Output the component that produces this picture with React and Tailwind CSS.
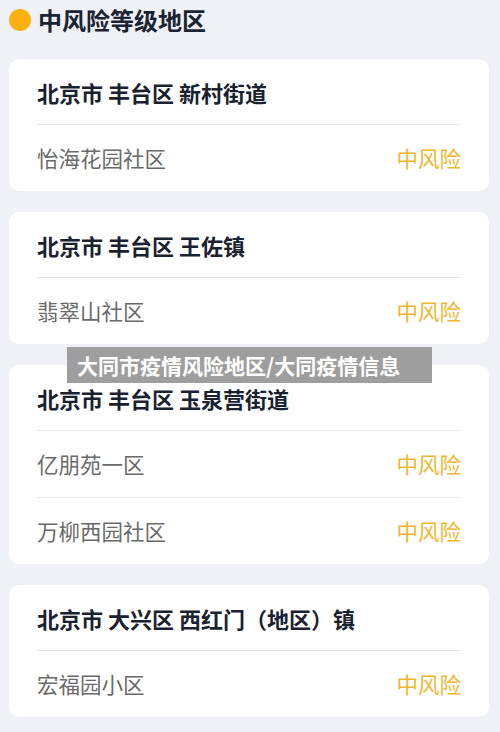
import React from "react";

const cards = [
  { title: "北京市 丰台区 新村街道", rows: ["怡海花园社区"] },
  { title: "北京市 丰台区 王佐镇", rows: ["翡翠山社区"] },
  { title: "北京市 丰台区 玉泉营街道", rows: ["亿朋苑一区", "万柳西园社区"] },
  { title: "北京市 大兴区 西红门（地区）镇", rows: ["宏福园小区"] },
];

export default function App() {
  return (
    <div
      className="relative w-[500px] h-[732px] overflow-hidden bg-[#eef1f5]"
      style={{ fontFamily: '"Noto Sans CJK SC", "Noto Sans", sans-serif' }}
    >
      <div className="flex items-center h-[39px] pl-[9px] gap-[7px]">
        <div className="w-[22px] h-[22px] rounded-full bg-[#fbb012]" />
        <div className="text-[24px] font-bold text-[#1c2433] leading-none">中风险等级地区</div>
      </div>
      <div className="flex flex-col gap-[21px] pl-[9px] pr-[11px] pt-[20px]">
        {cards.map((c, i) => (
          <div key={i} className="bg-white rounded-[10px] px-[28px]">
            <div className="h-[65px] flex items-center text-[22px] font-bold text-[#1a2230] leading-none pt-[1px] whitespace-pre">
              {c.title}
            </div>
            {c.rows.map((r, j) => (
              <div key={j} className="h-[67px] border-t border-[#e6e8eb] flex items-center justify-between text-[21.5px] leading-none">
                <span className="text-[#6a6a6a]">{r}</span>
                <span className="text-[#efb630]">中风险</span>
              </div>
            ))}
          </div>
        ))}
      </div>
      <div className="absolute left-[67px] top-[347px] w-[365px] h-[36px] bg-[#9e9e9e] flex items-center pl-[10px]">
        <span className="text-white font-bold text-[21px] leading-none">大同市疫情风险地区/大同疫情信息</span>
      </div>
    </div>
  );
}
